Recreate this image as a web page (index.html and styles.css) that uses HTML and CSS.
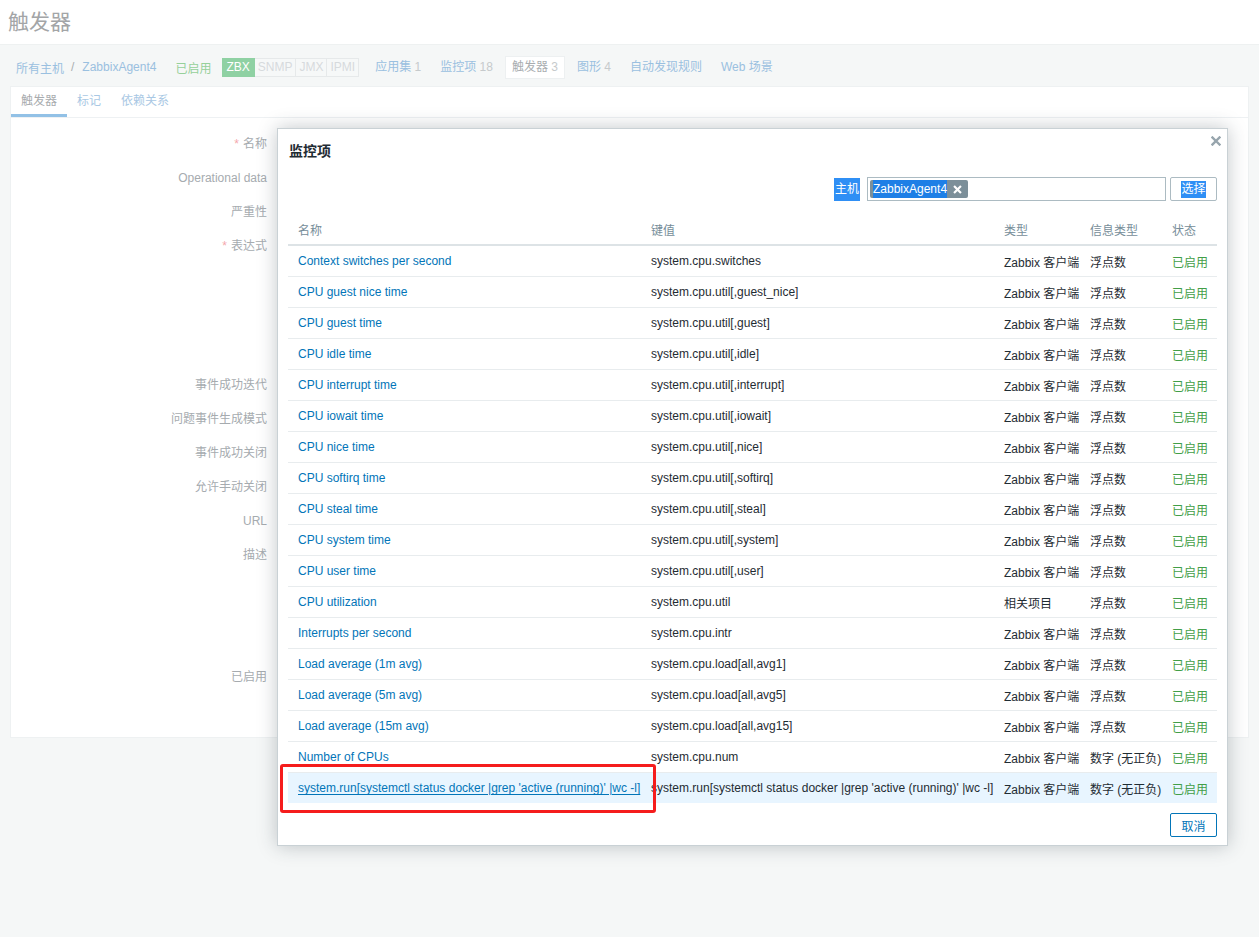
FILE: index.html
```html
<!DOCTYPE html>
<html lang="zh">
<head>
<meta charset="utf-8">
<title>触发器</title>
<link rel="stylesheet" href="styles.css">
</head>
<body>
<header class="page-header"><h1>触发器</h1></header>
<main class="page-main">
  <nav class="crumbs">
    <span class="c-link c-first">所有主机</span>
    <span class="c-sep">/</span>
    <span class="c-link">ZabbixAgent4</span>
    <span class="c-green">已启用</span>
    <span class="badges"><span class="badge zbx">ZBX</span><span class="badge">SNMP</span><span class="badge">JMX</span><span class="badge">IPMI</span></span>
    <span class="c-item c-apps"><span class="c-link">应用集</span> <span class="c-num">1</span></span>
    <span class="c-item"><span class="c-link">监控项</span> <span class="c-num">18</span></span>
    <span class="c-item c-sel"><span class="c-gray">触发器</span> <span class="c-num">3</span></span>
    <span class="c-item"><span class="c-link">图形</span> <span class="c-num">4</span></span>
    <span class="c-item"><span class="c-link">自动发现规则</span></span>
    <span class="c-item"><span class="c-link">Web 场景</span></span>
  </nav>
  <section class="panel">
    <div class="tabs">
      <span class="tab active">触发器</span>
      <span class="tab">标记</span>
      <span class="tab">依赖关系</span>
    </div>
    <div class="form">
      <div class="frow"><label class="flabel"><span class="req">*</span>名称</label></div>
      <div class="frow"><label class="flabel">Operational data</label></div>
      <div class="frow"><label class="flabel">严重性</label></div>
      <div class="frow tall-expr"><label class="flabel"><span class="req">*</span>表达式</label></div>
      <div class="frow"><label class="flabel">事件成功迭代</label></div>
      <div class="frow"><label class="flabel">问题事件生成模式</label></div>
      <div class="frow"><label class="flabel">事件成功关闭</label></div>
      <div class="frow"><label class="flabel">允许手动关闭</label></div>
      <div class="frow"><label class="flabel">URL</label></div>
      <div class="frow tall-desc"><label class="flabel">描述</label></div>
      <div class="frow"><label class="flabel">已启用</label></div>
    </div>
  </section>
</main>

<div class="modal">
  <div class="modal-title">监控项</div>
  <span class="modal-close"><svg width="10" height="10" viewBox="0 0 10 10"><path d="M1.5 1.5 L8.5 8.5 M8.5 1.5 L1.5 8.5" stroke="#97a5ad" stroke-width="2.4" stroke-linecap="square"/></svg></span>
  <div class="filter">
    <span class="flt-label">主机</span>
    <div class="ms-input">
      <span class="chip"><span class="chip-text">ZabbixAgent4</span><span class="chip-x"><svg width="9" height="9" viewBox="0 0 10 10"><path d="M2 2 L8 8 M8 2 L2 8" stroke="#fff" stroke-width="2.4" stroke-linecap="square"/></svg></span></span>
    </div>
    <span class="btn-select"><span class="hl">选择</span></span>
  </div>
  <table class="items">
    <colgroup><col class="w-name"><col class="w-key"><col class="w-type"><col class="w-info"><col class="w-status"></colgroup>
    <thead>
      <tr><th>名称</th><th>键值</th><th>类型</th><th>信息类型</th><th>状态</th></tr>
    </thead>
    <tbody>
      <tr><td><a class="lnk">Context switches per second</a></td><td>system.cpu.switches</td><td>Zabbix 客户端</td><td>浮点数</td><td class="ok">已启用</td></tr>
      <tr><td><a class="lnk">CPU guest nice time</a></td><td>system.cpu.util[,guest_nice]</td><td>Zabbix 客户端</td><td>浮点数</td><td class="ok">已启用</td></tr>
      <tr><td><a class="lnk">CPU guest time</a></td><td>system.cpu.util[,guest]</td><td>Zabbix 客户端</td><td>浮点数</td><td class="ok">已启用</td></tr>
      <tr><td><a class="lnk">CPU idle time</a></td><td>system.cpu.util[,idle]</td><td>Zabbix 客户端</td><td>浮点数</td><td class="ok">已启用</td></tr>
      <tr><td><a class="lnk">CPU interrupt time</a></td><td>system.cpu.util[,interrupt]</td><td>Zabbix 客户端</td><td>浮点数</td><td class="ok">已启用</td></tr>
      <tr><td><a class="lnk">CPU iowait time</a></td><td>system.cpu.util[,iowait]</td><td>Zabbix 客户端</td><td>浮点数</td><td class="ok">已启用</td></tr>
      <tr><td><a class="lnk">CPU nice time</a></td><td>system.cpu.util[,nice]</td><td>Zabbix 客户端</td><td>浮点数</td><td class="ok">已启用</td></tr>
      <tr><td><a class="lnk">CPU softirq time</a></td><td>system.cpu.util[,softirq]</td><td>Zabbix 客户端</td><td>浮点数</td><td class="ok">已启用</td></tr>
      <tr><td><a class="lnk">CPU steal time</a></td><td>system.cpu.util[,steal]</td><td>Zabbix 客户端</td><td>浮点数</td><td class="ok">已启用</td></tr>
      <tr><td><a class="lnk">CPU system time</a></td><td>system.cpu.util[,system]</td><td>Zabbix 客户端</td><td>浮点数</td><td class="ok">已启用</td></tr>
      <tr><td><a class="lnk">CPU user time</a></td><td>system.cpu.util[,user]</td><td>Zabbix 客户端</td><td>浮点数</td><td class="ok">已启用</td></tr>
      <tr><td><a class="lnk">CPU utilization</a></td><td>system.cpu.util</td><td>相关项目</td><td>浮点数</td><td class="ok">已启用</td></tr>
      <tr><td><a class="lnk">Interrupts per second</a></td><td>system.cpu.intr</td><td>Zabbix 客户端</td><td>浮点数</td><td class="ok">已启用</td></tr>
      <tr><td><a class="lnk">Load average (1m avg)</a></td><td>system.cpu.load[all,avg1]</td><td>Zabbix 客户端</td><td>浮点数</td><td class="ok">已启用</td></tr>
      <tr><td><a class="lnk">Load average (5m avg)</a></td><td>system.cpu.load[all,avg5]</td><td>Zabbix 客户端</td><td>浮点数</td><td class="ok">已启用</td></tr>
      <tr><td><a class="lnk">Load average (15m avg)</a></td><td>system.cpu.load[all,avg15]</td><td>Zabbix 客户端</td><td>浮点数</td><td class="ok">已启用</td></tr>
      <tr><td><a class="lnk">Number of CPUs</a></td><td>system.cpu.num</td><td>Zabbix 客户端</td><td>数字 (无正负)</td><td class="ok">已启用</td></tr>
      <tr class="hover"><td><a class="lnk ul">system.run[systemctl status docker |grep 'active (running)' |wc -l]</a></td><td>system.run[systemctl status docker |grep 'active (running)' |wc -l]</td><td>Zabbix 客户端</td><td>数字 (无正负)</td><td class="ok">已启用</td></tr>
    </tbody>
  </table>
  <div class="modal-foot"><span class="btn-cancel">取消</span></div>
</div>
<div class="red-mark"></div>
</body>
</html>
```

FILE: styles.css
```css
html, body {
  margin: 0;
  padding: 0;
}
body {
  width: 1259px;
  height: 937px;
  overflow: hidden;
  position: relative;
  font-family: "Liberation Sans", Arial, "Noto Sans CJK SC", sans-serif;
  font-size: 12px;
  color: #1f2c33;
  background: #f5f7f7;
}
.page-header {
  height: 45px;
  background: #ffffff;
  border-bottom: 1px solid #eef1f1;
  box-sizing: border-box;
}
.page-header h1 {
  margin: 0;
  padding-left: 8px;
  font-weight: normal;
  font-size: 21px;
  line-height: 44px;
  color: #a3a5a7;
}
.page-main {
  background: #f5f7f7;
}
.crumbs {
  height: 41px;
  box-sizing: border-box;
  padding-top: 3px;
  display: flex;
  align-items: center;
  white-space: nowrap;
}
.c-link { color: #9ac0e0; }
.c-gray { color: #a9adb0; }
.c-num { color: #c6cacc; }
.c-first { margin-left: 16px; }
.c-sep { color: #a9adb0; margin: 0 8px 0 7px; }
.c-green { color: #96d09a; margin-left: 19px; }
.badges {
  display: flex;
  margin-left: 11px;
}
.badge {
  display: inline-block;
  height: 17px;
  line-height: 17px;
  padding: 0 3px;
  border: 1px solid #e6e9ea;
  border-left: none;
  color: #d6dadd;
  background: #f6f8f8;
  font-size: 12px;
}
.badge.zbx {
  background: #8fd1a3;
  border-color: #8fd1a3;
  color: #ffffff;
  padding: 0 4px;
}
.c-item {
  padding: 0 6px;
  height: 21px;
  line-height: 21px;
  margin-left: 7px;
}
.c-apps { margin-left: 10px; }
.c-sel {
  background: #ffffff;
  box-shadow: 0 0 0 1px #edf0f1;
}
.panel {
  margin: 0 10px;
  height: 652px;
  background: #ffffff;
  border: 1px solid #eef1f2;
  box-sizing: border-box;
}
.tabs {
  height: 30px;
  display: flex;
  border-bottom: 1px solid #eef1f3;
}
.tab {
  padding: 0 10px;
  line-height: 28px;
  color: #a9c8e4;
  border-bottom: 3px solid transparent;
}
.tab.active {
  color: #a8abae;
  border-bottom-color: #92c1e6;
}
.form {
  padding-top: 9px;
}
.frow {
  height: 34px;
}
.frow.tall-expr { height: 139px; }
.frow.tall-desc { height: 122px; }
.flabel {
  display: block;
  width: 256px;
  text-align: right;
  line-height: 34px;
  color: #a6abaf;
}
.req {
  color: #f4a8ad;
  margin-right: 4px;
}

/* modal */
.modal {
  position: absolute;
  left: 277px;
  top: 128px;
  width: 951px;
  height: 718px;
  box-sizing: border-box;
  background: #ffffff;
  border: 1px solid #c9d1d5;
  box-shadow: 0 0 18px rgba(40, 55, 65, 0.28);
  padding: 0 10px;
}
.modal-title {
  padding: 12px 0 0 1px;
  font-size: 14px;
  font-weight: bold;
  line-height: 20px;
  color: #1f2c33;
}
.modal-close {
  position: absolute;
  right: 6px;
  top: 7px;
  width: 10px;
  height: 10px;
  display: flex;
}
.filter {
  margin-top: 16px;
  height: 24px;
  display: flex;
  justify-content: flex-end;
  align-items: center;
}
.flt-label {
  height: 23px;
  line-height: 23px;
  padding: 0 1px;
  background: #2f8ff5;
  color: #ffffff;
  margin-right: 7px;
}
.ms-input {
  width: 299px;
  height: 24px;
  box-sizing: border-box;
  border: 1px solid #acbbc2;
  padding: 2px;
  display: flex;
  align-items: center;
}
.chip {
  display: flex;
  align-items: center;
  height: 18px;
  background: #7c8f99;
  border-radius: 2px;
  padding-left: 3px;
}
.chip-text {
  background: #1e7fe6;
  color: #ffffff;
  line-height: 18px;
  height: 18px;
}
.chip-x {
  width: 21px;
  display: flex;
  justify-content: center;
  align-items: center;
}
.btn-select {
  margin-left: 4px;
  width: 47px;
  height: 24px;
  box-sizing: border-box;
  border: 1px solid #acbbc2;
  border-radius: 2px;
  display: flex;
  justify-content: center;
  align-items: center;
}
.hl {
  background: #2f8ff5;
  color: #ffffff;
  line-height: 17px;
}
.items {
  margin-top: 13px;
  width: 929px;
  border-collapse: collapse;
  table-layout: fixed;
}
.w-name { width: 353px; }
.w-key { width: 353px; }
.w-type { width: 86px; }
.w-info { width: 82px; }
.w-status { width: 55px; }
.items th {
  height: 31px;
  padding: 0 0 0 10px;
  text-align: left;
  font-weight: normal;
  color: #768d99;
  border-bottom: 2px solid #dde3e6;
  white-space: nowrap;
  box-sizing: border-box;
}
.items td {
  height: 30px;
  padding: 0 0 0 10px;
  border-bottom: 1px solid #e8ecee;
  white-space: nowrap;
  overflow: visible;
}
.items tr:last-child td { border-bottom: none; }
.items tr.hover td { background: #e8f5ff; }
.lnk { color: #0275b8; text-decoration: none; }
.lnk.ul { text-decoration: underline; text-underline-offset: 2px; }
.ok { color: #429e47; }
.modal-foot {
  margin-top: 10px;
  display: flex;
  justify-content: flex-end;
}
.btn-cancel {
  width: 47px;
  height: 24px;
  box-sizing: border-box;
  border: 1px solid #0275b8;
  border-radius: 2px;
  color: #0275b8;
  display: flex;
  justify-content: center;
  align-items: center;
}
.red-mark {
  position: absolute;
  left: 280px;
  top: 764px;
  width: 376px;
  height: 49px;
  box-sizing: border-box;
  border: 3px solid #f51c1c;
  border-radius: 3px;
}
```
